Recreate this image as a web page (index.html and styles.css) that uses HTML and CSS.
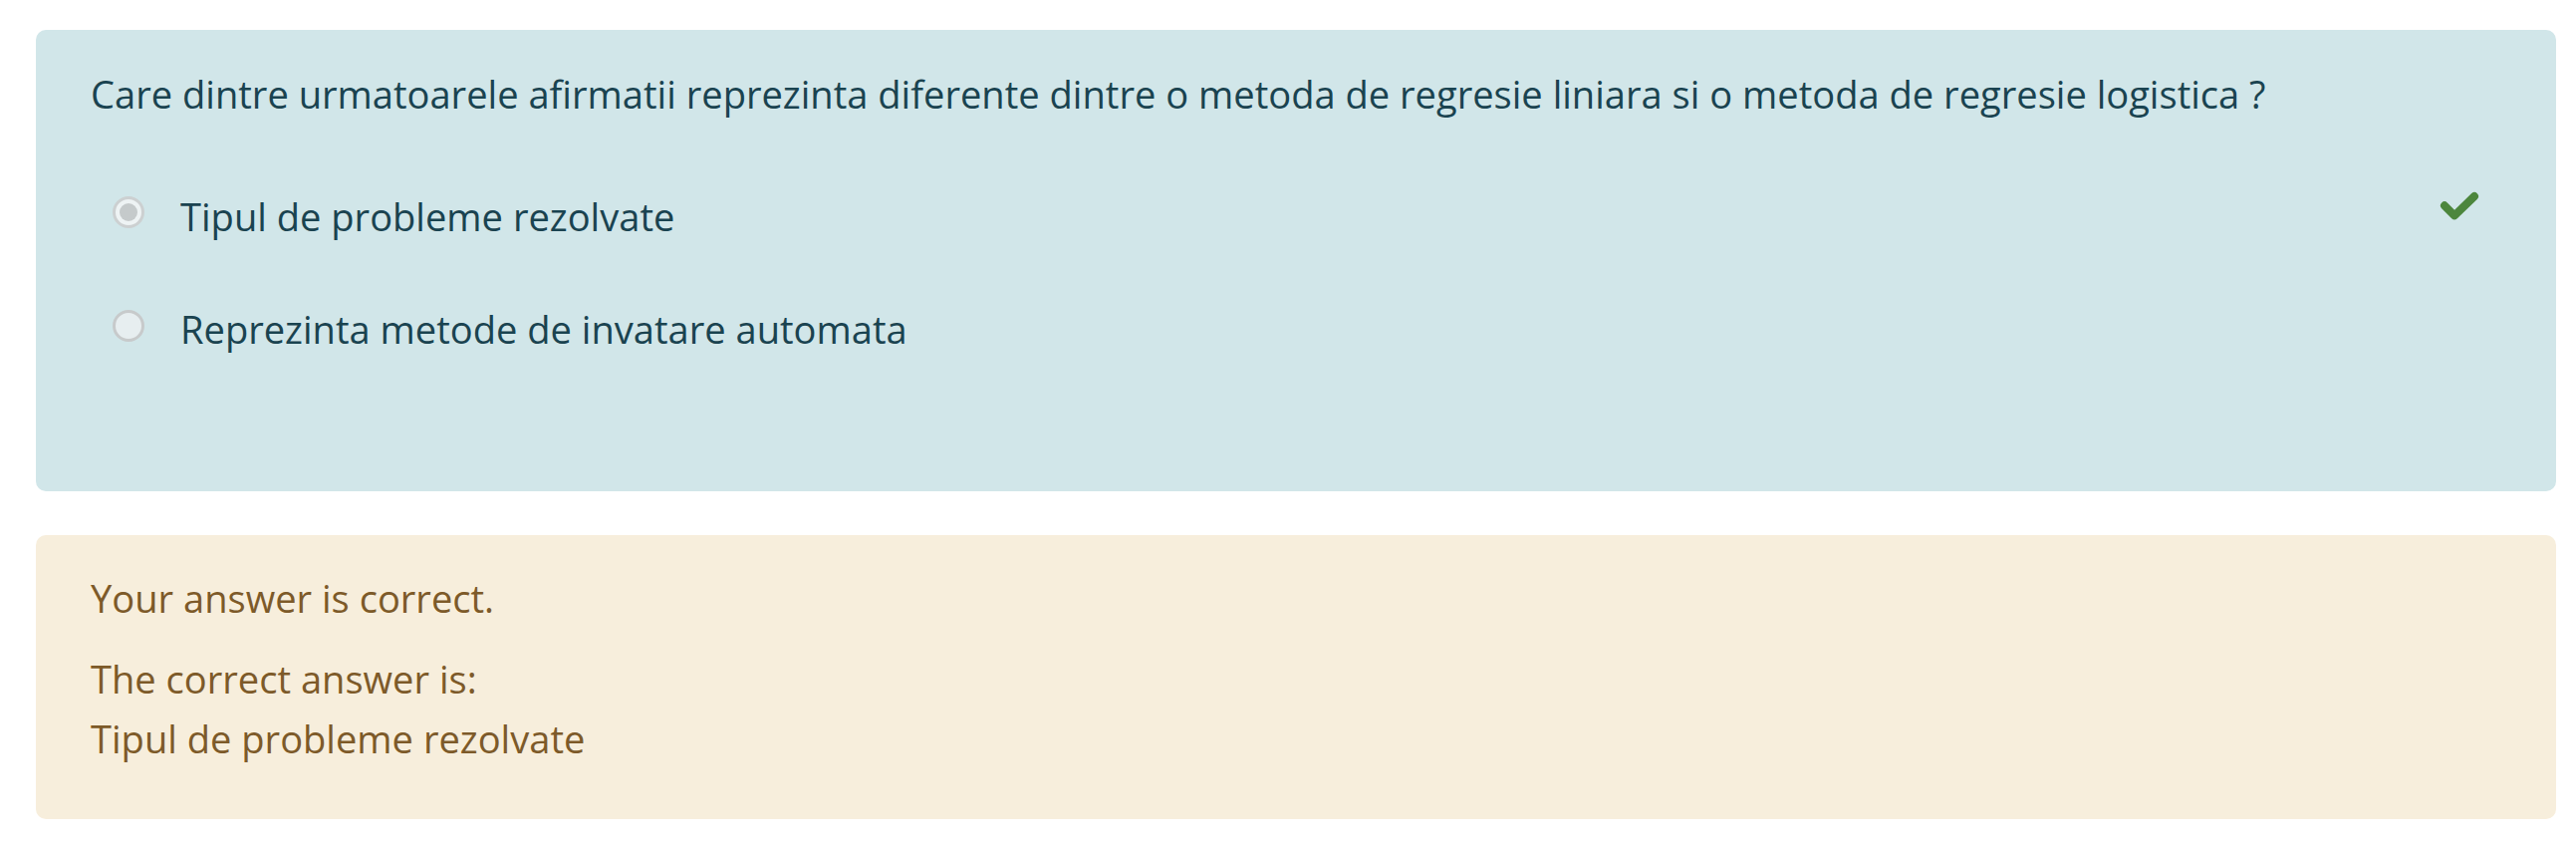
FILE: index.html
```html
<!DOCTYPE html>
<html lang="ro">
<head>
<meta charset="utf-8">
<title>Intrebare</title>
<link rel="stylesheet" href="styles.css">
</head>
<body>
<div class="que">
  <div class="formulation">
    <div class="qtext">Care dintre urmatoarele afirmatii reprezinta diferente dintre o metoda de regresie liniara si o metoda de regresie logistica ?</div>
    <div class="answer">
      <div class="option">
        <span class="radio radio-checked"><span class="dot"></span></span>
        <span class="label">Tipul de probleme rezolvate</span>
        <svg class="check" viewBox="0 0 46 38" width="46" height="38" aria-hidden="true">
          <polyline points="8,17.3 18,27.3 38,8" fill="none" stroke="#4c863d" stroke-width="8" stroke-linecap="round" stroke-linejoin="round"/>
        </svg>
      </div>
      <div class="option">
        <span class="radio"></span>
        <span class="label">Reprezinta metode de invatare automata</span>
      </div>
    </div>
  </div>
  <div class="outcome">
    <p class="feedback">Your answer is correct.</p>
    <div class="rightanswer">The correct answer is:<br>Tipul de probleme rezolvate</div>
  </div>
</div>
</body>
</html>
```
FILE: styles.css
```css
html, body {
  margin: 0;
  padding: 0;
  background: #ffffff;
}

body {
  font-family: "Open Sans", "Noto Sans", sans-serif;
  font-size: 38.1px;
  line-height: 57px;
}

.que {
  padding: 30px 20px 0 36px;
  display: flex;
  flex-direction: column;
  gap: 43.5px;
}

.formulation {
  background: #d1e6e9;
  color: #1a4350;
  border-radius: 10px;
  padding: 36px 74px 134px 55px;
}

.qtext {
  margin-bottom: 65.5px;
}

.answer {
  display: flex;
  flex-direction: column;
  gap: 56.5px;
}

.option {
  display: flex;
  align-items: flex-start;
  padding-left: 22px;
}

.radio {
  flex: none;
  box-sizing: border-box;
  width: 32px;
  height: 32px;
  margin-top: 8.5px;
  margin-right: 36px;
  border-radius: 50%;
  border: 3px solid #c7cacb;
  background: #e7eef0;
  display: flex;
  align-items: center;
  justify-content: center;
}

.radio-checked {
  border-color: #ccd0d1;
  background: #eef3f4;
}

.radio-checked .dot {
  width: 18px;
  height: 18px;
  border-radius: 50%;
  background: #c5cacb;
}

.label {
  flex: 1;
}

.check {
  flex: none;
  display: block;
}

.outcome {
  background: #f7eedc;
  color: #7d5a29;
  border-radius: 10px;
  line-height: 59.5px;
  padding: 34px 55px 51px 55px;
}

.feedback {
  margin: 0 0 22px 0;
}

.rightanswer {
  margin: 0;
}
```
